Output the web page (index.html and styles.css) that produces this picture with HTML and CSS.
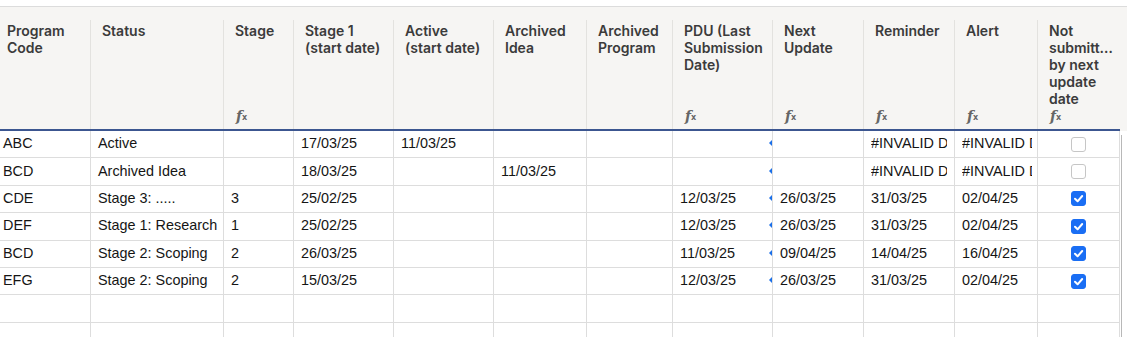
FILE: index.html
```html
<!DOCTYPE html>
<html lang="en">
<head>
<meta charset="utf-8">
<title>Programs</title>
<link rel="stylesheet" href="styles.css">
</head>
<body>
<div class="sheet">
  <div class="table">
    <div class="row head">
      <div class="hc"><div class="hin"><span>Program Code</span></div></div>
      <div class="hc"><div class="hin"><span>Status</span></div></div>
      <div class="hc"><div class="hin"><span>Stage</span><span class="fx"><i>f</i><b>x</b></span></div></div>
      <div class="hc"><div class="hin"><span>Stage 1 (start date)</span></div></div>
      <div class="hc"><div class="hin"><span>Active (start date)</span></div></div>
      <div class="hc"><div class="hin"><span>Archived Idea</span></div></div>
      <div class="hc"><div class="hin"><span>Archived Program</span></div></div>
      <div class="hc"><div class="hin"><span>PDU (Last Submission Date)</span><span class="fx"><i>f</i><b>x</b></span></div></div>
      <div class="hc"><div class="hin"><span>Next Update</span><span class="fx"><i>f</i><b>x</b></span></div></div>
      <div class="hc"><div class="hin"><span>Reminder</span><span class="fx"><i>f</i><b>x</b></span></div></div>
      <div class="hc"><div class="hin"><span>Alert</span><span class="fx"><i>f</i><b>x</b></span></div></div>
      <div class="hc last"><div class="hin"><span>Not <span class="ell">submitted</span>by next update date</span><span class="fx"><i>f</i><b>x</b></span></div></div>
    </div>

    <div class="row">
      <div class="c">ABC</div><div class="c">Active</div><div class="c"></div><div class="c">17/03/25</div><div class="c">11/03/25</div><div class="c"></div><div class="c"></div>
      <div class="c pdu"></div><div class="c"></div>
      <div class="c"><span class="clip">#INVALID DATE</span></div><div class="c alert"><span class="clip">#INVALID DATE</span></div>
      <div class="c chk"><span class="box"></span></div>
    </div>
    <div class="row">
      <div class="c">BCD</div><div class="c">Archived Idea</div><div class="c"></div><div class="c">18/03/25</div><div class="c"></div><div class="c">11/03/25</div><div class="c"></div>
      <div class="c pdu"></div><div class="c"></div>
      <div class="c"><span class="clip">#INVALID DATE</span></div><div class="c alert"><span class="clip">#INVALID DATE</span></div>
      <div class="c chk"><span class="box"></span></div>
    </div>
    <div class="row">
      <div class="c">CDE</div><div class="c">Stage 3: .....</div><div class="c">3</div><div class="c">25/02/25</div><div class="c"></div><div class="c"></div><div class="c"></div>
      <div class="c pdu">12/03/25</div><div class="c">26/03/25</div><div class="c">31/03/25</div><div class="c alert">02/04/25</div>
      <div class="c chk"><span class="box on"><svg viewBox="0 0 15 15" width="15" height="15"><polyline points="4,7.8 6.6,10.3 11.2,5" /></svg></span></div>
    </div>
    <div class="row">
      <div class="c">DEF</div><div class="c">Stage 1: Research</div><div class="c">1</div><div class="c">25/02/25</div><div class="c"></div><div class="c"></div><div class="c"></div>
      <div class="c pdu">12/03/25</div><div class="c">26/03/25</div><div class="c">31/03/25</div><div class="c alert">02/04/25</div>
      <div class="c chk"><span class="box on"><svg viewBox="0 0 15 15" width="15" height="15"><polyline points="4,7.8 6.6,10.3 11.2,5" /></svg></span></div>
    </div>
    <div class="row">
      <div class="c">BCD</div><div class="c">Stage 2: Scoping</div><div class="c">2</div><div class="c">26/03/25</div><div class="c"></div><div class="c"></div><div class="c"></div>
      <div class="c pdu">11/03/25</div><div class="c">09/04/25</div><div class="c">14/04/25</div><div class="c alert">16/04/25</div>
      <div class="c chk"><span class="box on"><svg viewBox="0 0 15 15" width="15" height="15"><polyline points="4,7.8 6.6,10.3 11.2,5" /></svg></span></div>
    </div>
    <div class="row">
      <div class="c">EFG</div><div class="c">Stage 2: Scoping</div><div class="c">2</div><div class="c">15/03/25</div><div class="c"></div><div class="c"></div><div class="c"></div>
      <div class="c pdu">12/03/25</div><div class="c">26/03/25</div><div class="c">31/03/25</div><div class="c alert">02/04/25</div>
      <div class="c chk"><span class="box on"><svg viewBox="0 0 15 15" width="15" height="15"><polyline points="4,7.8 6.6,10.3 11.2,5" /></svg></span></div>
    </div>
    <div class="row">
      <div class="c"></div><div class="c"></div><div class="c"></div><div class="c"></div><div class="c"></div><div class="c"></div><div class="c"></div><div class="c"></div><div class="c"></div><div class="c"></div><div class="c"></div><div class="c"></div>
    </div>
    <div class="row">
      <div class="c"></div><div class="c"></div><div class="c"></div><div class="c"></div><div class="c"></div><div class="c"></div><div class="c"></div><div class="c"></div><div class="c"></div><div class="c"></div><div class="c"></div><div class="c"></div>
    </div>
  </div>
  <div class="side">
    <div class="side-head"></div>
    <div class="side-body"></div>
  </div>
</div>
</body>
</html>
```

FILE: styles.css
```css
html, body {
  margin: 0;
  padding: 0;
  background: #ffffff;
}

body {
  height: 337px;
  overflow: hidden;
}

.sheet {
  --cols: 95px 133px 70px 100px 100px 93px 86px 100px 91px 91px 83px 82px;
  display: flex;
  margin-top: 6px;
  border-top: 1px solid #dcdcdc;
  height: 330px;
  overflow: hidden;
}

.table {
  flex: none;
  margin-left: -4px;
  width: 1124px;
}

.row {
  display: grid;
  grid-template-columns: var(--cols);
}

/* header */
.hc {
  background: #f6f5f3;
  padding-top: 13px;
  border-bottom: 2px solid #3c5690;
  min-width: 0;
}

.hin {
  box-sizing: border-box;
  height: 109px;
  border-right: 1px solid #e3e2df;
  padding: 2px 5px 5px 11px;
  display: flex;
  flex-direction: column;
  justify-content: space-between;
  font-family: Inter, "Noto Sans", sans-serif;
  font-weight: 600;
  font-size: 14px;
  line-height: 17px;
  color: #3b3b3b;
  overflow: hidden;
}

.hc.last .hin {
  border-right: none;
  padding-right: 6px;
}

.ell {
  display: block;
  overflow: hidden;
  white-space: nowrap;
  text-overflow: ellipsis;
}

.fx {
  display: flex;
  align-items: flex-end;
  height: 15px;
  margin-left: 1px;
  color: #666666;
  font-family: "DejaVu Serif", "Liberation Serif", serif;
  line-height: 15px;
}

.fx i {
  font-style: italic;
  font-weight: 700;
  font-size: 14px;
}

.fx b {
  font-family: "DejaVu Sans", sans-serif;
  font-weight: 700;
  font-size: 8px;
  line-height: 8px;
  margin-left: 0;
  margin-bottom: 2px;
}

/* body cells */
.c {
  position: relative;
  box-sizing: border-box;
  height: 27.4px;
  border-right: 1px solid #dddddd;
  border-bottom: 1px solid #dddddd;
  padding: 0 7px 2px 7px;
  display: flex;
  align-items: center;
  overflow: hidden;
  white-space: nowrap;
  min-width: 0;
  font-family: "Liberation Sans", Arial, sans-serif;
  font-size: 14.4px;
  color: #151515;
}

.c.alert {
  padding-right: 5px;
}

.clip {
  display: block;
  overflow: hidden;
  min-width: 0;
  white-space: nowrap;
}

.pdu::after {
  content: "";
  position: absolute;
  right: 0;
  top: 50%;
  margin-top: -4px;
  border-style: solid;
  border-width: 3px 3px 3px 0;
  border-color: transparent #1a6fe8 transparent transparent;
}

.chk {
  justify-content: center;
  padding-bottom: 0;
}

.box {
  box-sizing: border-box;
  width: 15px;
  height: 15px;
  border: 1px solid #c6c6c6;
  border-radius: 3px;
  background: #ffffff;
  display: block;
  position: relative;
}

.box.on {
  background: #1a6ef4;
  border-color: #1a6ef4;
}

.box svg {
  position: absolute;
  left: -1px;
  top: -1px;
}

.box polyline {
  fill: none;
  stroke: #ffffff;
  stroke-width: 2;
  stroke-linecap: round;
  stroke-linejoin: round;
}

/* right-hand strip */
.side {
  flex: 1;
  display: flex;
  flex-direction: column;
}

.side-head {
  height: 124px;
  background: #f6f5f3;
}

.side-body {
  flex: 1;
  margin-top: 4px;
  margin-left: 1px;
  border-left: 1px solid #b8b8b8;
}
```
